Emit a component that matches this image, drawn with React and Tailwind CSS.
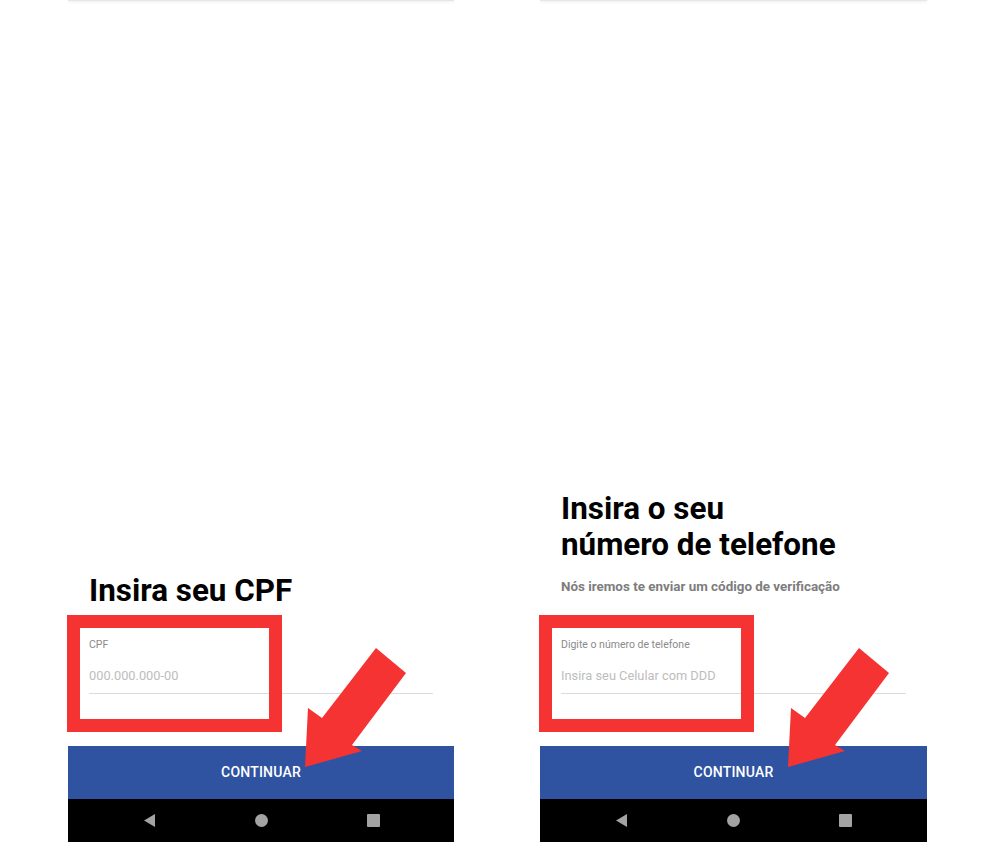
import React from "react";

const Arrow = ({ left }) => (
  <svg
    className="absolute top-[648px]"
    style={{ left }}
    width="101"
    height="119"
    viewBox="0 0 101 119"
  >
    <polygon points="71,0 101,25 47,97 57,103 0,119 3,60 17,70" fill="#f53333" />
  </svg>
);

const NavBar = () => (
  <div className="h-[43px] bg-black flex items-center justify-center gap-[99px]">
    <svg width="13" height="13" viewBox="0 0 13 13">
      <polygon points="12,0 12,13 1,6.5" fill="#a3a3a3" />
    </svg>
    <div className="w-[13px] h-[13px] rounded-full bg-[#a3a3a3]" />
    <div className="w-[13px] h-[13px] rounded-[1px] bg-[#a3a3a3]" />
  </div>
);

const Panel = ({ width, title, subtitle, label, placeholder, arrowLeft }) => (
  <div className={`relative h-[842px] flex flex-col ${width}`}>
    <div className="h-px bg-[#e6e6e6] shadow-[0_1px_3px_rgba(0,0,0,0.12)]" />
    <div className="flex-1" />
    <div className="px-[21px]">
      <h1
        className={`text-[31.4px] leading-[36px] font-bold text-black ${
          subtitle ? "mb-[16px]" : "mb-[30px]"
        }`}
      >
        {title}
      </h1>
      {subtitle && (
        <p className="text-[13.4px] leading-[16px] font-bold text-[#7d7d7d] mb-[44px]">
          {subtitle}
        </p>
      )}
      <div className="text-[10.5px] leading-[12px] text-[#8a8a8a]">{label}</div>
      <div className="mt-[17px] text-[12.8px] leading-[16px] text-[#bdbdbd]">
        {placeholder}
      </div>
      <div className="mt-[9px] h-px bg-[#dcdcdc] mb-[52px]" />
    </div>
    <button className="h-[53px] bg-[#2f53a1] text-white text-[14px] font-medium tracking-[0.2px]">
      CONTINUAR
    </button>
    <NavBar />

    <div className="absolute left-[-1px] top-[615px] w-[215px] h-[117px] border-[13px] border-[#f53333]" />
    <Arrow left={arrowLeft} />
  </div>
);

export default function App() {
  return (
    <div
      className="w-[984px] h-[842px] overflow-hidden bg-white flex pl-[68px] gap-[86px]"
      style={{ fontFamily: "Roboto, 'Noto Sans', sans-serif" }}
    >
      <Panel
        width="w-[386px]"
        title="Insira seu CPF"
        label="CPF"
        placeholder="000.000.000-00"
        arrowLeft={237}
      />
      <Panel
        width="w-[387px]"
        title={
          <>
            Insira o seu
            <br />
            número de telefone
          </>
        }
        subtitle="Nós iremos te enviar um código de verificação"
        label="Digite o número de telefone"
        placeholder="Insira seu Celular com DDD"
        arrowLeft={248}
      />
    </div>
  );
}
